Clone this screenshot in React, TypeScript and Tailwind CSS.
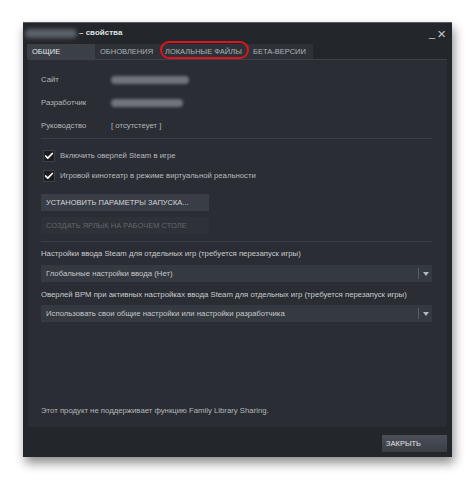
import { Check } from 'lucide-react';

const tabs = [
  { label: 'ОБЩИЕ', width: 'w-[68px]', active: true },
  { label: 'ОБНОВЛЕНИЯ', width: 'w-[65px]', active: false },
  { label: 'ЛОКАЛЬНЫЕ ФАЙЛЫ', width: 'w-[88px]', active: false },
  { label: 'БЕТА-ВЕРСИИ', width: 'w-[65px]', active: false },
];

function InfoRow({ label, children }: { label: string; children: React.ReactNode }) {
  return (
    <div className="flex items-center h-[23px]">
      <span className="w-[70px] text-[#b3b7bb]">{label}</span>
      {children}
    </div>
  );
}

function Blurred({ width }: { width: string }) {
  return <div className={`${width} h-[8px] rounded-full bg-[#70757c] blur-[1.5px]`} />;
}

function CheckRow({ label }: { label: string }) {
  return (
    <div className="flex items-center h-[20px] pl-[2px]">
      <div className="w-[12px] h-[12px] bg-[#1c1e22] border border-[#3c4047] flex items-center justify-center">
        <Check className="w-[10px] h-[10px] text-white" strokeWidth={4} />
      </div>
      <span className="ml-[5px] text-[#b6babe]">{label}</span>
    </div>
  );
}

function Select({ value }: { value: string }) {
  return (
    <div className="flex items-center h-[17px] w-[391px] bg-[#353940] text-[#c4c7ca]">
      <span className="flex-1 pl-[5px]">{value}</span>
      <div className="w-[1px] h-[11px] bg-[#5b6068]" />
      <div className="w-[13px] flex items-center justify-center">
        <svg width="6" height="4" viewBox="0 0 6 4">
          <polygon points="0,0 6,0 3,4" fill="#b4b8bc" />
        </svg>
      </div>
    </div>
  );
}

export default function App() {
  return (
    <div
      className="w-[474px] h-[480px] bg-white pt-[22px] pl-[23px]"
      style={{ fontFamily: '"Liberation Sans", Arial, sans-serif' }}
    >
      <div className="relative w-[429px] h-[435px] bg-[#23262b] border-t border-[#5a5e64] shadow-[2px_6px_10px_rgba(0,0,0,0.45)] flex flex-col text-[7.75px] leading-[12px]">
        {/* title bar */}
        <div className="flex items-center h-[20px] pl-[2px] pr-[6px]">
          <div className="w-[52px] h-[9px] rounded-full bg-[#5d626a] blur-[2px]" />
          <span className="ml-[2px] text-[8px] font-bold text-[#dfe1e3]">– свойства</span>
          <div className="ml-auto flex items-center gap-[2px] text-[#c3c6ca]">
            <span className="text-[11px] leading-none mt-[1px]">_</span>
            <span className="text-[15px] leading-none">×</span>
          </div>
        </div>

        {/* tabs */}
        <div className="flex h-[15px] pl-[4px] mt-[1px]">
          {tabs.map((t) => (
            <div
              key={t.label}
              className={`${t.width} flex items-center pl-[5px] text-[7.5px] ${
                t.active ? 'bg-[#3b3f46] text-[#e6e8ea]' : 'bg-[#2e3238] text-[#aeb2b7]'
              }`}
            >
              {t.label}
            </div>
          ))}
        </div>

        {/* red highlight */}
        <div className="absolute left-[137px] top-[18px] w-[89px] h-[18px] rounded-full border-[2.5px] border-[#e0141a]" />

        {/* content panel */}
        <div className="mx-[5px] h-[368px] bg-[#2a2d33] border-t border-[#3d4148] flex flex-col px-[13px] pt-[8px] pb-[10px]">
          <InfoRow label="Сайт">
            <Blurred width="w-[78px]" />
          </InfoRow>
          <InfoRow label="Разработчик">
            <Blurred width="w-[72px]" />
          </InfoRow>
          <InfoRow label="Руководство">
            <span className="text-[#b3b7bb]">[ отсутстеует ]</span>
          </InfoRow>

          <div className="h-[1px] bg-[#3a3e45] mt-[1px] mr-[2px]" />

          <div className="mt-[7px]">
            <CheckRow label="Включить оверлей Steam в игре" />
            <CheckRow label="Игровой кинотеатр в режиме виртуальной реальности" />
          </div>

          <div className="mt-[8px] w-[168px] h-[17px] bg-[#393d45] flex items-center pl-[5px] text-[7.5px] text-[#d3d6d9]">
            УСТАНОВИТЬ ПАРАМЕТРЫ ЗАПУСКА...
          </div>
          <div className="mt-[6px] w-[168px] h-[17px] bg-[#2e3137] flex items-center pl-[5px] text-[7.5px] text-[#62676d]">
            СОЗДАТЬ ЯРЛЫК НА РАБОЧЕМ СТОЛЕ
          </div>

          <div className="h-[1px] bg-[#3a3e45] mt-[7px] mr-[2px]" />

          <div className="mt-[6px] text-[#c8cbce]">
            Настройки ввода Steam для отдельных игр (требуется перезапуск игры)
          </div>
          <div className="mt-[5px]">
            <Select value="Глобальные настройки ввода (Нет)" />
          </div>
          <div className="mt-[7px] text-[#c8cbce]">
            Оверлей BPM при активных настройках ввода Steam для отдельных игр (требуется перезапуск игры)
          </div>
          <div className="mt-[4px]">
            <Select value="Использовать свои общие настройки или настройки разработчика" />
          </div>

          <div className="mt-auto text-[#b3b7bb]">
            Этот продукт не поддерживает функцию Family Library Sharing.
          </div>
        </div>

        {/* footer */}
        <div className="flex justify-end pr-[5px] mt-[8px]">
          <div className="w-[65px] h-[17px] bg-gradient-to-b from-[#4a4f57] to-[#3a3e45] flex items-center pl-[4px] text-[7.5px] text-[#e2e4e6]">
            ЗАКРЫТЬ
          </div>
        </div>
      </div>
    </div>
  );
}
